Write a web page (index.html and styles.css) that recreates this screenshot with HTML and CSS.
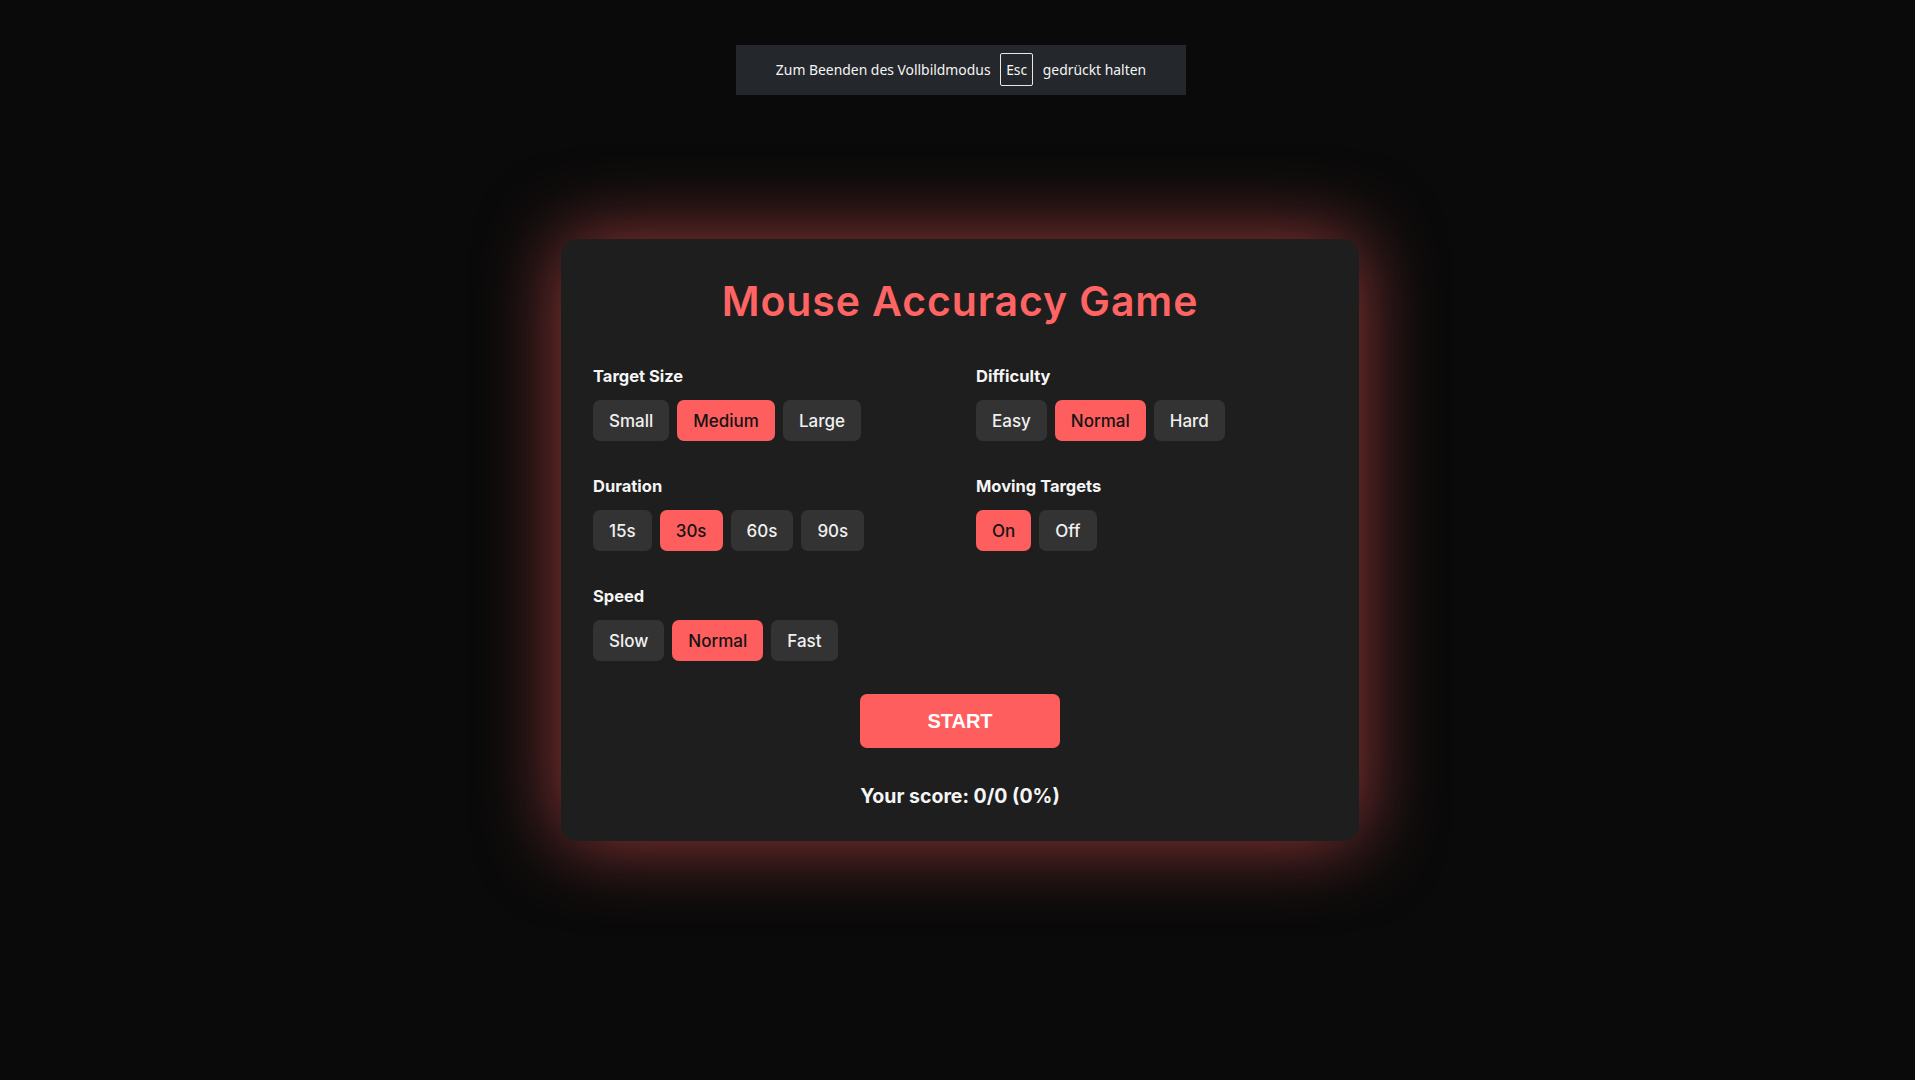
FILE: index.html
```html
<!DOCTYPE html>
<html lang="en">
<head>
<meta charset="utf-8">
<title>Mouse Accuracy Game</title>
<link rel="stylesheet" href="styles.css">
</head>
<body>
<div class="fs-notice">Zum Beenden des Vollbildmodus <span class="key">Esc</span> gedrückt halten</div>
<main class="card">
  <h1 class="title">Mouse Accuracy Game</h1>
  <div class="settings">
    <section class="group">
      <h2 class="label">Target Size</h2>
      <div class="options">
        <button class="opt">Small</button>
        <button class="opt active">Medium</button>
        <button class="opt">Large</button>
      </div>
    </section>
    <section class="group">
      <h2 class="label">Difficulty</h2>
      <div class="options">
        <button class="opt">Easy</button>
        <button class="opt active">Normal</button>
        <button class="opt">Hard</button>
      </div>
    </section>
    <section class="group">
      <h2 class="label">Duration</h2>
      <div class="options">
        <button class="opt">15s</button>
        <button class="opt active">30s</button>
        <button class="opt">60s</button>
        <button class="opt">90s</button>
      </div>
    </section>
    <section class="group">
      <h2 class="label">Moving Targets</h2>
      <div class="options">
        <button class="opt active">On</button>
        <button class="opt">Off</button>
      </div>
    </section>
    <section class="group">
      <h2 class="label">Speed</h2>
      <div class="options">
        <button class="opt">Slow</button>
        <button class="opt active">Normal</button>
        <button class="opt">Fast</button>
      </div>
    </section>
  </div>
  <div class="actions">
    <button class="start">START</button>
  </div>
  <p class="score">Your score: 0/0 (0%)</p>
</main>
</body>
</html>
```
FILE: styles.css
```css
* { box-sizing: border-box; }
html, body { margin: 0; padding: 0; }
body {
  background: #0a0a0a;
  min-height: 100vh;
  display: flex;
  align-items: center;
  justify-content: center;
  padding-left: 5px;
  font-family: Inter, "Noto Sans", sans-serif;
  color: #f2f2f2;
}
.fs-notice {
  position: absolute;
  top: 45px;
  left: 736px;
  width: 450px;
  height: 50px;
  background: #24272c;
  color: #f5f5f5;
  font-family: "Noto Sans", "Open Sans", sans-serif;
  font-size: 13.9px;
  display: flex;
  align-items: center;
  justify-content: center;
  padding-bottom: 1px;
  white-space: pre;
}
.key {
  display: inline-flex;
  align-items: center;
  justify-content: center;
  width: 33px;
  height: 33px;
  border: 1px solid #e8e8e8;
  border-radius: 2px;
  margin: 0 6px;
}
.card {
  width: 798px;
  height: 602px;
  background: #1e1e1e;
  border-radius: 15px;
  padding: 32px;
  box-shadow: 0 0 80px rgba(255, 94, 94, 0.6);
}
.title {
  margin: 0 0 33px;
  text-align: center;
  color: #ff6464;
  font-size: 41px;
  font-weight: 600;
  letter-spacing: 0.9px;
  line-height: 60px;
}
.settings {
  display: grid;
  grid-template-columns: 1fr 1fr;
  column-gap: 32px;
  row-gap: 33px;
}
.label {
  margin: 0 0 12px;
  font-size: 16.5px;
  font-weight: 700;
  line-height: 24px;
  color: #f5f5f5;
}
.options {
  display: flex;
  gap: 8px;
}
.opt {
  height: 41px;
  padding: 0 16px;
  border: none;
  border-radius: 7px;
  background: #333333;
  color: #f0f0f0;
  font-family: Inter, "Noto Sans", sans-serif;
  font-size: 17px;
  font-weight: 500;
  font-variant-numeric: proportional-nums;
}
.opt.active {
  background: #ff5e5e;
  color: #141414;
}
.actions {
  display: flex;
  justify-content: center;
  margin-top: 33px;
}
.start {
  width: 200px;
  height: 54px;
  border: none;
  border-radius: 7px;
  background: #ff5e5e;
  color: #ffffff;
  font-family: "Liberation Sans", Arial, sans-serif;
  font-size: 20px;
  font-weight: 700;
}
.score {
  margin: 36px 0 0;
  text-align: center;
  font-size: 19.5px;
  font-weight: 700;
  color: #f5f5f5;
}
```
